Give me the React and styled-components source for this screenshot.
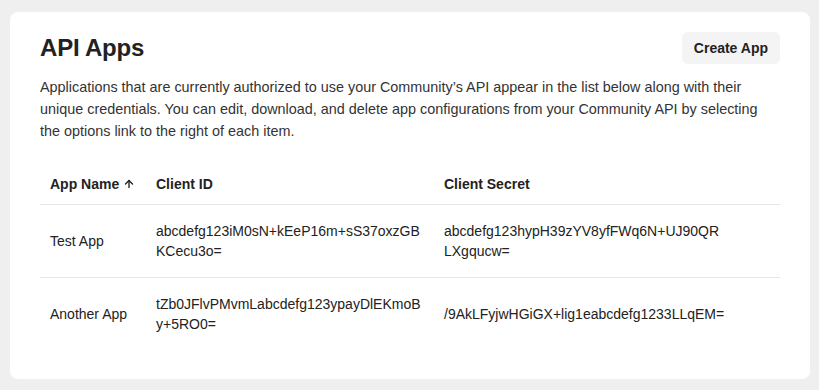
import React from 'react';
import styled, { createGlobalStyle } from 'styled-components';
import { ArrowUp } from 'lucide-react';

const GlobalStyle = createGlobalStyle`
  html, body {
    margin: 0;
    background: #efefef;
    font-family: "Liberation Sans", Arial, Helvetica, sans-serif;
    color: #222;
  }
  * { box-sizing: border-box; }
`;

const Page = styled.div`
  padding: 12px 9px 11px 10px;
`;

const Card = styled.section`
  background: #fff;
  border-radius: 8px;
  padding: 20px 30px 29px;
`;

const Header = styled.div`
  display: flex;
  align-items: center;
  justify-content: space-between;
  height: 32px;
`;

const Title = styled.h1`
  margin: 0;
  font-size: 24px;
  font-weight: 600;
  letter-spacing: -0.2px;
  color: #222;
`;

const Button = styled.button`
  height: 32px;
  padding: 0 12px;
  border: none;
  border-radius: 6px;
  background: #f4f4f4;
  font-family: inherit;
  font-size: 14px;
  font-weight: 700;
  color: #222;
  cursor: pointer;
`;

const Description = styled.p`
  margin: 12px 0 0;
  font-size: 14.4px;
  line-height: 22px;
  color: #333;
`;

const Table = styled.table`
  width: 100%;
  margin-top: 22px;
  border-collapse: collapse;
  table-layout: fixed;
  font-size: 14px;
`;

const Th = styled.th`
  text-align: left;
  font-weight: 700;
  line-height: 20px;
  padding: 10px;
  border-bottom: 1px solid #e6e6e6;
  color: #222;
  white-space: nowrap;
`;

const SortIcon = styled(ArrowUp)`
  vertical-align: -1px;
  margin-left: 4px;
  color: #222;
`;

const Row = styled.tr`
  & + & td {
    border-top: 1px solid #e6e6e6;
  }
`;

const Td = styled.td`
  padding: 16px 10px;
  line-height: 20px;
  vertical-align: middle;
  color: #222;
`;

const Key = styled.div`
  max-width: ${({ $max }) => $max}px;
  word-break: break-all;
`;

const apps = [
  {
    name: 'Test App',
    id: 'abcdefg123iM0sN+kEeP16m+sS37oxzGBKCecu3o=',
    secret: 'abcdefg123hypH39zYV8yfFWq6N+UJ90QRLXgqucw=',
  },
  {
    name: 'Another App',
    id: 'tZb0JFlvPMvmLabcdefg123ypayDlEKmoBy+5RO0=',
    secret: '/9AkLFyjwHGiGX+lig1eabcdefg1233LLqEM=',
  },
];

export default function App() {
  return (
    <Page>
      <GlobalStyle />
      <Card>
        <Header>
          <Title>API Apps</Title>
          <Button>Create App</Button>
        </Header>
        <Description>
          Applications that are currently authorized to use your Community’s API appear in the list below along with their
          unique credentials. You can edit, download, and delete app configurations from your Community API by selecting
          the options link to the right of each item.
        </Description>
        <Table>
          <colgroup>
            <col style={{ width: 106 }} />
            <col style={{ width: 288 }} />
            <col />
          </colgroup>
          <thead>
            <tr>
              <Th>
                App Name
                <SortIcon size={12} strokeWidth={2.75} />
              </Th>
              <Th>Client ID</Th>
              <Th>Client Secret</Th>
            </tr>
          </thead>
          <tbody>
            {apps.map((app) => (
              <Row key={app.name}>
                <Td>{app.name}</Td>
                <Td>
                  <Key $max={268}>{app.id}</Key>
                </Td>
                <Td>
                  <Key $max={282}>{app.secret}</Key>
                </Td>
              </Row>
            ))}
          </tbody>
        </Table>
      </Card>
    </Page>
  );
}
